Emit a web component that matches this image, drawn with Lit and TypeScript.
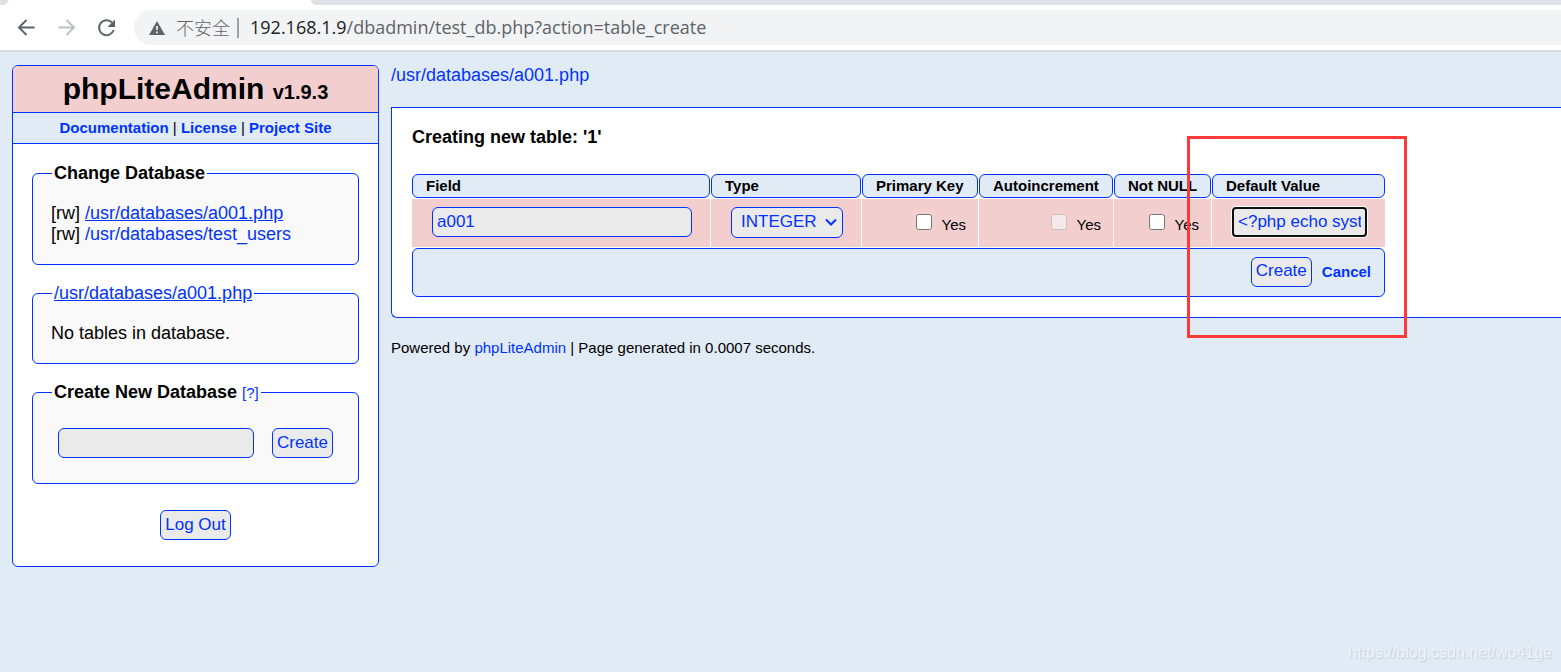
import { LitElement, html, css } from "lit";
import { customElement } from "lit/decorators.js";

interface Column {
  label: string;
  cls: string;
}

const COLUMNS: Column[] = [
  { label: "Field", cls: "c-field" },
  { label: "Type", cls: "c-type" },
  { label: "Primary Key", cls: "c-pk" },
  { label: "Autoincrement", cls: "c-auto" },
  { label: "Not NULL", cls: "c-null" },
  { label: "Default Value", cls: "c-default" },
];

@customElement("browser-bar")
class BrowserBar extends LitElement {
  static styles = css`
    :host {
      display: block;
      background: #fff;
      border-bottom: 2px solid #dadce0;
      font-family: "Open Sans", "Noto Sans", "Noto Sans CJK SC", sans-serif;
    }
    .tabs {
      display: flex;
      gap: 303px;
      height: 5px;
      overflow: hidden;
    }
    .tab-left {
      width: 8px;
      background: #dee1e6;
      border-bottom-right-radius: 8px;
    }
    .tab-rest {
      flex: 1;
      background: #dee1e6;
      border-bottom-left-radius: 8px;
    }
    .bar {
      display: flex;
      align-items: center;
      padding: 5px 0 5px 14px;
    }
    .nav {
      display: flex;
      gap: 16px;
      margin-right: 16px;
    }
    .nav button {
      display: block;
      padding: 0;
      border: 0;
      background: none;
      width: 24px;
      height: 24px;
    }
    svg {
      display: block;
    }
    .address {
      flex: 1;
      display: flex;
      align-items: center;
      height: 35px;
      padding-left: 14px;
      background: #f1f3f4;
      border-radius: 18px 0 0 18px;
      color: #5f6368;
      font-size: 18px;
      white-space: nowrap;
    }
    .warn {
      margin-right: 10px;
    }
    .unsafe {
      font-family: "Noto Sans CJK SC", sans-serif;
      font-weight: 300;
    }
    .sep {
      width: 2px;
      height: 20px;
      margin: 0 11px 0 7px;
      background: #9aa0a6;
    }
    .host {
      color: #202124;
    }
  `;

  render() {
    return html`
      <div class="tabs"><div class="tab-left"></div><div class="tab-rest"></div></div>
      <div class="bar">
        <div class="nav">
          <button aria-label="Back">
            <svg width="24" height="24" viewBox="0 0 24 24" fill="none" stroke="#5f6368" stroke-width="2">
              <path d="M20.500 11.500H5.500M12.500 4L5 11.500l7.500 7.500" />
            </svg>
          </button>
          <button aria-label="Forward">
            <svg width="24" height="24" viewBox="0 0 24 24" fill="none" stroke="#bdbfc2" stroke-width="2">
              <path d="M4.500 11.500H19.500M12.500 4l7.500 7.500-7.500 7.500" />
            </svg>
          </button>
          <button aria-label="Reload">
            <svg width="24" height="24" viewBox="0 0 24 24">
              <path d="M18 6.500A7.500 7.500 0 1 0 19.700 14" fill="none" stroke="#5f6368" stroke-width="2" />
              <path d="M21 3.500v7.500h-7.500z" fill="#5f6368" />
            </svg>
          </button>
        </div>
        <div class="address">
          <svg class="warn" width="18" height="18" viewBox="0 0 18 18">
            <path d="M9 2l8 14H1z" fill="#5f6368" />
            <path d="M9 7v4M9 12.400v1.800" stroke="#f1f3f4" stroke-width="1.700" />
          </svg>
          <span class="unsafe">不安全</span>
          <span class="sep"></span>
          <span><span class="host">192.168.1.9</span>/dbadmin/test_db.php?action=table_create</span>
        </div>
      </div>
    `;
  }
}

@customElement("app-root")
class AppRoot extends LitElement {
  static styles = css`
    :host {
      display: block;
      position: relative;
      min-height: 100vh;
      overflow: hidden;
      background: #e0ebf6;
      color: #000;
      font: 18px/21px "Liberation Sans", Arial, sans-serif;
    }
    a {
      color: #03f;
      text-decoration: none;
    }
    a.active {
      text-decoration: underline;
    }
    .page {
      display: flex;
      align-items: flex-start;
      gap: 12px;
      padding: 13px 0 0 12px;
    }
    .side {
      flex: none;
      box-sizing: border-box;
      width: 367px;
      background: #fff;
      border: 1px solid #03f;
      border-radius: 6px;
      overflow: hidden;
    }
    h1 {
      margin: 0;
      padding-bottom: 1px;
      background: #f2cecf;
      border-bottom: 1px solid #03f;
      font-size: 30px;
      line-height: 45px;
      text-align: center;
    }
    .version {
      font-size: 20px;
      line-height: 20px;
    }
    .docs {
      background: #e0ebf6;
      border-bottom: 1px solid #03f;
      font-size: 15px;
      line-height: 30px;
      text-align: center;
    }
    .docs a {
      font-weight: bold;
    }
    .groups {
      display: flex;
      flex-direction: column;
      gap: 18px;
      padding: 19px 19px 26px;
    }
    fieldset {
      margin: 0;
      min-width: 0;
      padding: 19px 18px;
      background: #f9f9f9;
      border: 1px solid #03f;
      border-radius: 6px;
    }
    legend {
      padding: 0 2px;
      margin-left: 1px;
      font-weight: bold;
    }
    legend a {
      font-weight: normal;
    }
    .help {
      font-size: 15px;
    }
    .new-db {
      display: flex;
      gap: 18px;
      padding: 6px 7px;
    }
    input,
    select,
    button {
      font-family: inherit;
      font-size: 17px;
      color: #03f;
      margin: 0;
    }
    .text,
    .btn,
    select {
      box-sizing: border-box;
      height: 30px;
      padding: 0 4px 1px;
      background: #eaeaea;
      border: 1px solid #03f;
      border-radius: 6px;
      outline: none;
    }
    .text {
      display: block;
      width: 100%;
      min-width: 0;
    }
    .btn {
      flex: none;
    }
    .logout {
      display: flex;
      justify-content: center;
      padding-top: 8px;
    }
    .main {
      flex: 1;
      min-width: 0;
    }
    .path {
      line-height: 20px;
      margin-bottom: 22px;
    }
    .box {
      background: #fff;
      border: 1px solid #03f;
      border-right: 0;
      border-radius: 0 0 0 6px;
      padding: 19px 0 19px 19px;
    }
    h2 {
      margin: 0 0 25px 1px;
      font-size: 18px;
      line-height: 21px;
    }
    .sheet {
      position: relative;
      width: 975px;
    }
    table {
      width: 100%;
      table-layout: fixed;
      border-collapse: separate;
      border-spacing: 1px;
      font-size: 15px;
    }
    .c-field { width: 298px; }
    .c-type { width: 150px; }
    .c-pk { width: 116px; }
    .c-auto { width: 134px; }
    .c-null { width: 97px; }
    th,
    .foot {
      box-sizing: border-box;
      background: #e0ebf6;
      border: 1px solid #03f;
      border-radius: 6px;
    }
    th {
      padding: 0 13px;
      line-height: 22px;
      text-align: left;
      white-space: nowrap;
    }
    .cell {
      box-sizing: border-box;
      height: 48px;
      padding: 0 18px 2px 20px;
      background: #f2cecf;
    }
    .cell-check {
      padding: 2px 12px 0 0;
    }
    .check {
      display: flex;
      justify-content: flex-end;
      align-items: baseline;
      gap: 10px;
    }
    .check input {
      width: 16px;
      height: 16px;
    }
    .pick {
      display: grid;
      width: 112px;
      align-items: center;
    }
    .pick select,
    .pick svg {
      grid-area: 1 / 1;
    }
    .pick svg {
      justify-self: end;
      margin-right: 5px;
      pointer-events: none;
    }
    select {
      appearance: none;
      width: 100%;
      height: 31px;
      padding: 0 9px 1px;
    }
    .text.focused {
      border: 2px solid #101010;
      border-radius: 4px;
      box-shadow: 0 0 0 1px #fff;
    }
    .foot {
      height: 49px;
      padding: 0 13px 2px 0;
    }
    .actions {
      display: flex;
      justify-content: flex-end;
      align-items: center;
      gap: 10px;
      font-weight: bold;
    }
    .marker {
      position: absolute;
      top: -37px;
      right: -21px;
      bottom: -40px;
      width: 220px;
      box-sizing: border-box;
      border: 3px solid #fc3a3a;
      pointer-events: none;
    }
    .credits {
      margin: 19px 0 0;
      font-size: 15px;
    }
    .watermark {
      position: absolute;
      right: 9px;
      bottom: 9px;
      font-size: 16px;
      color: #eef3f9;
      text-shadow: 1px 1px 1px #c3cdd8;
    }
  `;

  private check(id: string, disabled = false) {
    return html`<td class="cell cell-check">
      <div class="check">
        <input type="checkbox" id=${id} ?disabled=${disabled} /><label for=${id}>Yes</label>
      </div>
    </td>`;
  }

  render() {
    return html`
      <browser-bar></browser-bar>
      <div class="page">
        <aside class="side">
          <h1>phpLiteAdmin <span class="version">v1.9.3</span></h1>
          <div class="docs">
            <a href="#">Documentation</a> | <a href="#">License</a> | <a href="#">Project Site</a>
          </div>
          <div class="groups">
            <fieldset>
              <legend>Change Database</legend>
              <div>[rw] <a class="active" href="#">/usr/databases/a001.php</a></div>
              <div>[rw] <a href="#">/usr/databases/test_users</a></div>
            </fieldset>
            <fieldset>
              <legend><a class="active" href="#">/usr/databases/a001.php</a></legend>
              <div>No tables in database.</div>
            </fieldset>
            <fieldset>
              <legend>Create New Database <a class="help" href="#">[?]</a></legend>
              <div class="new-db">
                <input class="text" type="text" aria-label="New database name" />
                <button class="btn">Create</button>
              </div>
            </fieldset>
            <div class="logout"><button class="btn">Log Out</button></div>
          </div>
        </aside>
        <main class="main">
          <div class="path"><a href="#">/usr/databases/a001.php</a></div>
          <section class="box">
            <h2>Creating new table: '1'</h2>
            <div class="sheet">
              <table>
                <colgroup>
                  ${COLUMNS.map((c) => html`<col class=${c.cls} />`)}
                </colgroup>
                <thead>
                  <tr>
                    ${COLUMNS.map((c) => html`<th scope="col">${c.label}</th>`)}
                  </tr>
                </thead>
                <tbody>
                  <tr>
                    <td class="cell"><input class="text" type="text" aria-label="Field" value="a001" /></td>
                    <td class="cell">
                      <span class="pick">
                        <select aria-label="Type">
                          <option>INTEGER</option>
                        </select>
                        <svg width="14" height="14" viewBox="0 0 14 14">
                          <path d="M2 4.500l5 5 5-5" fill="none" stroke="#03f" stroke-width="2" />
                        </svg>
                      </span>
                    </td>
                    ${this.check("pk")} ${this.check("auto", true)} ${this.check("notnull")}
                    <td class="cell">
                      <input class="text focused" type="text" aria-label="Default Value" value="<?php echo system" />
                    </td>
                  </tr>
                  <tr>
                    <td class="foot" colspan="6">
                      <div class="actions"><button class="btn">Create</button><a href="#">Cancel</a></div>
                    </td>
                  </tr>
                </tbody>
              </table>
              <div class="marker"></div>
            </div>
          </section>
          <p class="credits">
            Powered by <a href="#">phpLiteAdmin</a> | Page generated in 0.0007 seconds.
          </p>
        </main>
      </div>
      <div class="watermark">https://blog.csdn.net/wo41ge</div>
    `;
  }
}
